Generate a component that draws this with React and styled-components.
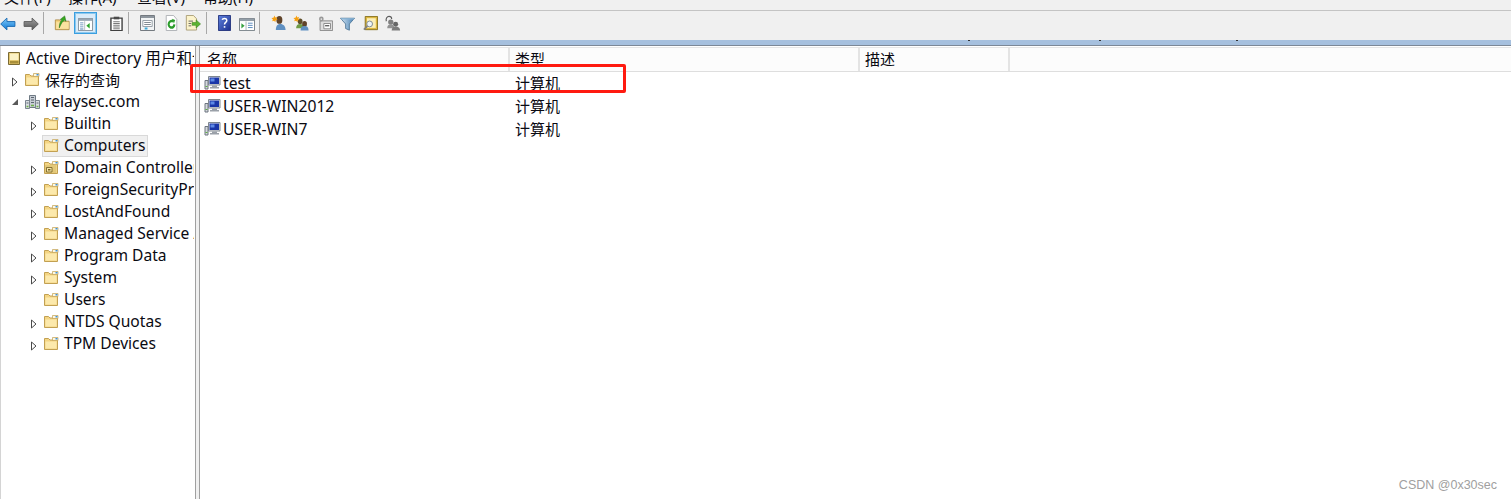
import React from "react";
import styled, { createGlobalStyle } from "styled-components";

const Global = createGlobalStyle`
  html, body { margin: 0; padding: 0; background: #fff; overflow: hidden; }
  body { font-family: "Noto Sans", "Noto Sans CJK SC", sans-serif; font-size: 15px; color: #0a0a12; }
  * { box-sizing: border-box; }
`;

const Page = styled.div`
  position: relative;
  width: 1511px;
  height: 499px;
  display: flex;
  flex-direction: column;
  overflow: hidden;
`;
const MenuBar = styled.div`
  height: 11px;
  flex: none;
  background: #f0f0f0;
  border-bottom: 1px solid #c4c4c4;
  overflow: hidden;
  display: flex;
  padding-left: 4px;
  font-size: 15px;
  line-height: 18px;
`;
const MenuItem = styled.span`
  width: ${(p) => p.$w}px;
  flex: none;
  margin-top: -12px;
  height: 18px;
  white-space: nowrap;
`;
const ToolBar = styled.div`
  height: 29px;
  flex: none;
  background: #f0f0f0;
  display: flex;
  align-items: flex-start;
  padding-top: 1px;
`;
const Tool = styled.div`
  flex: none;
  width: ${(p) => p.$w || 22}px;
  height: 22px;
  margin-left: ${(p) => p.$ml || 0}px;
  padding-bottom: 3px;
  display: flex;
  align-items: flex-end;
  justify-content: center;
  ${(p) => p.$active && "border: 1px solid #3a9fe0; box-shadow: inset 0 0 0 1px #8cc8ee; background: #d9ebf9; padding-bottom: 2px;"}
  svg { display: block; flex: none; }
`;
const ToolSep = styled.div`
  flex: none;
  width: 1px;
  height: 22px;
  margin-left: ${(p) => p.$ml || 0}px;
  background: #a8a8a8;
`;
const Band = styled.div`
  height: 6px;
  flex: none;
  background: #a6c0de;
  border-bottom: 1px solid #7d8896;
`;
const Speck = styled.i`
  position: absolute;
  top: 40px;
  left: ${(p) => p.$x}px;
  width: 2px;
  height: 1px;
  background: #333;
`;
const Panes = styled.div`
  flex: 1;
  display: flex;
  background: #f0f0f0;
  min-height: 0;
`;
const TreePane = styled.div`
  width: 196px;
  flex: none;
  background: #fff;
  border-left: 1px solid #d4d4d4;
  border-right: 1px solid #a0a0a0;
  padding: 1px 1px 0 0;
  overflow: hidden;
`;
const Row = styled.div`
  height: 22px;
  display: flex;
  align-items: center;
  padding-left: ${(p) => p.$pad}px;
  white-space: nowrap;
  overflow: hidden;
`;
const Twist = styled.span`
  width: 16px;
  height: 22px;
  flex: none;
  display: flex;
  align-items: center;
  justify-content: center;
`;
const Node = styled.span`
  height: 22px;
  flex: none;
  display: inline-flex;
  align-items: center;
  gap: ${(p) => p.$gap || 5}px;
  padding-right: 2px;
  border: 1px solid ${(p) => (p.$sel ? "#d9d9d9" : "transparent")};
  background: ${(p) => (p.$sel ? "#f0f0f0" : "transparent")};
`;
const Label = styled.span`
  font-size: ${(p) => (p.$cjk ? 15 : 15.6)}px;
  margin-top: -2px;
`;
const ArrowSvg = styled.svg`
  display: block;
  margin-top: 3px;
`;
const ListPane = styled.div`
  flex: 1;
  margin-left: 3px;
  background: #fff;
  border-left: 1px solid #a0a0a0;
  display: flex;
  flex-direction: column;
`;
const Header = styled.div`
  height: 25px;
  flex: none;
  margin-top: 1px;
  display: flex;
  background: #fcfcfc;
  border-top: 1px solid #e6e6e6;
  border-bottom: 1px solid #dedede;
`;
const HeadCell = styled.div`
  width: ${(p) => p.$w}px;
  flex: none;
  padding-left: ${(p) => p.$pl || 5}px;
  line-height: 23px;
  border-right: 2px solid #e4e4e4;
`;
const ListRow = styled.div`
  height: 23px;
  padding-bottom: 2px;
  display: flex;
  align-items: center;
  white-space: nowrap;
`;
const NameCell = styled.div`
  width: 315px;
  padding-left: 4px;
  flex: none;
  display: flex;
  align-items: center;
  gap: 2px;
  font-size: 15.7px;
`;
const RowList = styled.div`
  display: flex;
  flex-direction: column;
`;
const Mark = styled.div`
  position: absolute;
  left: 190px;
  top: 64px;
  width: 436px;
  height: 29px;
  border: 3px solid #ff1a10;
  border-radius: 2px;
`;
const Watermark = styled.div`
  position: absolute;
  right: 14px;
  bottom: 7px;
  font-family: "Liberation Sans", sans-serif;
  font-size: 12.5px;
  color: #a0a0a0;
`;

const Folder = ({ dc }) => (
  <svg width="16" height="16" viewBox="0 0 16 16">
    <path d="M1.500 2.500h4l1.500 1.500h7.500v9.500h-13z" fill="#f4d583" stroke="#c2a052" />
    <path d="M2.500 5.500h11v7h-11z" fill="#fce9ac" />
    <path d="M9.500 1.500h5.500v3h-5.500z" fill="#fff8e0" stroke="#c2a052" strokeWidth=".7" />
    <path d="M12.500 2h2v1.500h-2z" fill="#3f93de" />
    {dc && <path d="M2 5h11.500v8h-11.500z" fill="#e3c878" />}
    {dc && <path d="M3.500 7.500h5.500v4.500h-5.500z" fill="#f3e4a6" stroke="#6e5a20" strokeWidth=".8" />}
    {dc && <path d="M5 9h2.500v1.500h-2.500z" fill="#7a6420" />}
  </svg>
);
const ArrowOpen = () => (
  <ArrowSvg width="8" height="10" viewBox="0 0 8 10"><path d="M1.500 1v8l4.500-4z" fill="#fff" stroke="#4a4a4a" /></ArrowSvg>
);
const ArrowDown = () => (
  <svg width="8" height="8" viewBox="0 0 8 8"><path d="M7 1v6h-6z" fill="#595959" /></svg>
);
const Snapin = () => (
  <svg width="16" height="16" viewBox="0 0 16 16">
    <path d="M1.500 2.500h11v12h-11z" fill="#e3c66c" stroke="#7a6a34" />
    <path d="M3 3.500h8.500v6.500h-8.500z" fill="#fbf2c6" />
    <path d="M3 11h8.500v2.500h-8.500z" fill="#a98f3a" />
  </svg>
);
const Domain = () => (
  <svg width="16" height="16" viewBox="-1 0 16 16">
    <path d="M4.500 1.500h6v12h-6z" fill="#c8ced6" stroke="#6f7a84" />
    <path d="M.5 6.500h4v8h-4zM10.500 6.500h4v8h-4z" fill="#d9dee3" stroke="#7b858f" />
    <path d="M6 3.500h3M6 6h3M6 8.500h3M1.500 9h2M11.500 9h2" stroke="#5c6670" />
    <path d="M1.500 12.500h2M11.500 12.500h2M6 11.500h3" stroke="#6fb24a" strokeWidth="1.500" />
  </svg>
);
const Computer = () => (
  <svg width="17" height="17" viewBox="0 -1 17 17">
    <path d="M1 5.500h3v8.500h-3z" fill="#d5d8dc" stroke="#6d7580" />
    <path d="M1.500 11.500h2" stroke="#5fae45" />
    <path d="M4.500 1.500h11.500v8.500h-11.500z" fill="#ececec" stroke="#7f8790" />
    <path d="M5.500 2.500h9.500v6.500h-9.500z" fill="#1a36a8" />
    <path d="M6.500 3.500h4v3h-4z" fill="#5e8ae6" />
    <path d="M8 10.500h5v1.500h2v1.500h-9v-1.500h2z" fill="#9aa0a8" />
  </svg>
);

const Icons = {
  back: (
    <svg width="16" height="14" viewBox="0 0 18 16" preserveAspectRatio="none">
      <defs><linearGradient id="ba" x1="0" y1="0" x2="0" y2="1"><stop offset="0" stopColor="#7fcbfa" /><stop offset="1" stopColor="#0f78d4" /></linearGradient></defs>
      <path d="M.8 8l7-6.800v4h9v5.600h-9v4z" fill="url(#ba)" stroke="#1768b0" />
    </svg>
  ),
  forward: (
    <svg width="16" height="14" viewBox="0 0 18 16" preserveAspectRatio="none">
      <defs><linearGradient id="fo" x1="0" y1="0" x2="0" y2="1"><stop offset="0" stopColor="#a0a0a0" /><stop offset="1" stopColor="#565656" /></linearGradient></defs>
      <path d="M17.200 8l-7-6.800v4h-9v5.600h9v4z" fill="url(#fo)" stroke="#5a5a5a" />
    </svg>
  ),
  up: (
    <svg width="16" height="16" viewBox="0 0 18 18">
      <path d="M1.500 5.500h5l1 1.500h9.500v9.500h-15.500z" fill="#f4d27c" stroke="#b08c48" />
      <path d="M2.500 8h14v7.500h-14z" fill="#fae2a0" />
      <path d="M6 14c0-4 1-7 3-8.500l-2-.5 5-4 1.500 6-1.800-1.200c-2 1.200-3.700 3.700-5.700 8.700z" fill="#36a81f" stroke="#25741a" strokeWidth=".6" />
    </svg>
  ),
  tree: (
    <svg width="15" height="13" viewBox="0 0 18 16" preserveAspectRatio="none">
      <path d="M.5.500h17v15h-17z" fill="#fff" stroke="#6f7a84" />
      <path d="M1 1h16v2.500h-16z" fill="#97a6b4" />
      <path d="M2.500 5.500h4v1h-4zM2.500 8h4v1h-4zM2.500 10.500h4v1h-4zM2.500 13h4v1h-4z" fill="#4f7cae" />
      <path d="M8 4v11" stroke="#aab4bd" />
      <path d="M14 6v7l-4-3.500z" fill="#2fa52f" />
    </svg>
  ),
  clipboard: (
    <svg width="13" height="15" viewBox="0 0 14 17" preserveAspectRatio="none">
      <path d="M1 2.500h12v14h-12z" fill="#fff" stroke="#404040" strokeWidth="1.500" />
      <path d="M4 .8h6v3h-6z" fill="#4a4a4a" />
      <path d="M3.500 6.500h7M3.500 8.500h7M3.500 10.500h7M3.500 12.500h7M3.500 14.500h7" stroke="#6a6a6a" />
    </svg>
  ),
  list: (
    <svg width="15" height="16" viewBox="0 0 16 16" preserveAspectRatio="none">
      <path d="M.5.500h15v15h-15z" fill="#f2f4f5" stroke="#70767c" />
      <path d="M1 1h14v2h-14z" fill="#8e969e" />
      <path d="M3 5.500h10v6h-10z" fill="#fff" stroke="#98a0a8" />
      <path d="M4.500 7.500h7M4.500 9.500h7" stroke="#7f878f" />
      <path d="M5 13.500h3" stroke="#3aa8d8" strokeWidth="2" />
    </svg>
  ),
  refresh: (
    <svg width="13" height="16" viewBox="0 0 16 17" preserveAspectRatio="none">
      <path d="M1.500.500h9l4 4v12h-13z" fill="#fff" stroke="#a8acb0" />
      <path d="M11.500 10a3.500 3.500 0 1 1-1.500-3" fill="none" stroke="#2b9c2b" strokeWidth="2.600" />
      <path d="M8.500 4l4 1.200-1.500 3.800z" fill="#2b9c2b" />
    </svg>
  ),
  exportList: (
    <svg width="16" height="16" viewBox="0 0 18 17" preserveAspectRatio="none">
      <path d="M1.500.500h8l3.500 3.500v12h-11.500z" fill="#fcf3cb" stroke="#a99d74" />
      <path d="M4 6.500h5M4 9h3M4 11.500h3" stroke="#5e5e5e" />
      <path d="M8 8h4.500v-2.800l5 4.300-5 4.300v-2.800h-4.500z" fill="#5cb332" stroke="#388419" strokeWidth=".6" />
    </svg>
  ),
  help: (
    <svg width="13" height="16" viewBox="0 0 14 17" preserveAspectRatio="none">
      <defs><linearGradient id="he" x1="0" y1="0" x2="1" y2="1"><stop offset="0" stopColor="#5f82de" /><stop offset="1" stopColor="#1c2f8e" /></linearGradient></defs>
      <path d="M.5.500h13v16h-13z" fill="url(#he)" stroke="#24347e" />
      <path d="M4.500 5c.5-1.500 4.500-2 5 .5.300 2-2.500 2.500-2.500 4.500" fill="none" stroke="#fff" strokeWidth="1.600" />
      <path d="M6.200 11.800h1.700v1.700h-1.700z" fill="#fff" />
    </svg>
  ),
  mmc: (
    <svg width="16" height="13" viewBox="0 0 17 15" preserveAspectRatio="none">
      <path d="M.5.500h16v14h-16z" fill="#fff" stroke="#6e7880" />
      <path d="M1 1h15v2.500h-15z" fill="#929ea8" />
      <path d="M2.500 6l3.500 3-3.500 3z" fill="#35a03f" />
      <path d="M7.500 4v10" stroke="#a5afb7" />
      <path d="M9.500 6h5M9.500 8.500h5M9.500 11h5" stroke="#4f83ba" />
    </svg>
  ),
  user: (
    <svg width="15" height="16" viewBox="0 0 17 18" preserveAspectRatio="none">
      <path d="M5.500 17c0-4.500 1.500-7 5-7s6 2.500 6 7z" fill="#5f90c2" />
      <ellipse cx="9.500" cy="5.500" rx="3.400" ry="4.400" fill="#5f4329" />
      <path d="M4 .5l.8 2.200 2.200-.7-1 2 1.500 1.500-2.200.4-.4 2.300-1.400-1.800-2.200.7.900-2.100-1.700-1.500 2.300-.3z" fill="#f7a010" />
    </svg>
  ),
  group: (
    <svg width="16" height="16" viewBox="0 0 18 18" preserveAspectRatio="none">
      <ellipse cx="8" cy="7" rx="2.700" ry="3.200" fill="#5f4f2a" />
      <path d="M3.500 15c0-3.500 1.500-5 4.500-5s4 1.500 4 5z" fill="#6f9b45" />
      <ellipse cx="13" cy="10" rx="2.700" ry="3.200" fill="#5f4329" />
      <path d="M8.500 17.500c0-3.500 1.500-5 4.500-5s4.500 1.500 4.500 5z" fill="#5f90c2" />
      <path d="M4 .5l.8 2.200 2.200-.7-1 2 1.500 1.500-2.200.4-.4 2.300-1.400-1.800-2.200.7.900-2.100-1.700-1.500 2.300-.3z" fill="#f7a010" />
    </svg>
  ),
  ou: (
    <svg width="15" height="15" viewBox="0 0 18 17" preserveAspectRatio="none">
      <path d="M2.500 5.500h15v11h-15z" fill="#dedede" stroke="#808080" />
      <path d="M7 8.500h8v6h-8z" fill="#fff" stroke="#808080" />
      <path d="M8.500 11h5" stroke="#5c5c5c" strokeWidth="1.500" />
      <circle cx="4" cy="3.500" r="2.800" fill="#989898" />
      <circle cx="4" cy="3.500" r="1" fill="#e8e8e8" />
    </svg>
  ),
  filter: (
    <svg width="15" height="14" viewBox="0 0 16 17" preserveAspectRatio="none">
      <defs><linearGradient id="fi" x1="0" y1="0" x2="1" y2="0"><stop offset="0" stopColor="#d4e6f3" /><stop offset="1" stopColor="#437eb2" /></linearGradient></defs>
      <path d="M.5 1.500h15l-5.500 7v7.500l-4-2v-5.500z" fill="url(#fi)" stroke="#507899" />
      <path d="M1 1.500h14v1.500h-14z" fill="#8fb8d8" />
    </svg>
  ),
  find: (
    <svg width="15" height="15" viewBox="0 0 17 17" preserveAspectRatio="none">
      <path d="M2.500 .5h14v15h-14z" fill="#dcb740" stroke="#806a18" />
      <path d="M4.500 2.500h10v11h-10z" fill="#fcefb8" />
      <circle cx="7.500" cy="9" r="3.300" fill="#eef4f8" stroke="#727e88" />
      <path d="M5 11.500l-4 4" stroke="#808080" strokeWidth="2" />
    </svg>
  ),
  delegate: (
    <svg width="16" height="16" viewBox="0 0 18 18" preserveAspectRatio="none">
      <path d="M1.500 7c-1-3 1-5.500 3-5.500s3 1.500 3 3" fill="none" stroke="#5c5c5c" strokeWidth="1.300" />
      <circle cx="6.500" cy="8" r="3" fill="#808080" />
      <path d="M2.500 15c0-3 1.500-4.500 4-4.500s4 1.500 4 4.500z" fill="#929292" />
      <circle cx="12" cy="10.500" r="2.800" fill="#666" />
      <path d="M7.500 17.500c0-3 1.800-4.500 4.500-4.500s5 1.500 5 4.500z" fill="#7c7c7c" />
    </svg>
  ),
};

const menus = [["文件(F)", 64], ["操作(A)", 69], ["查看(V)", 66], ["帮助(H)", 66]];
const tools = [
  { i: "back", w: 16 },
  { i: "forward", ml: 4 },
  { sep: 1, ml: 1 },
  { i: "up", ml: 7 },
  { i: "tree", ml: 1, w: 23, active: 1 },
  { i: "clipboard", ml: 8 },
  { sep: 1, ml: 1 },
  { i: "list", ml: 7 },
  { i: "refresh", ml: 2 },
  { i: "exportList" },
  { sep: 1, ml: 2 },
  { i: "help", ml: 6 },
  { i: "mmc", ml: 1 },
  { sep: 1, ml: 1 },
  { i: "user", ml: 7 },
  { i: "group", ml: 1 },
  { i: "ou", ml: 2 },
  { i: "filter" },
  { i: "find", ml: 1 },
  { i: "delegate", ml: 1 },
];
const children = [
  { t: "Builtin", a: 1 },
  { t: "Computers", sel: 1 },
  { t: "Domain Controllers", a: 1, dc: 1 },
  { t: "ForeignSecurityPrincipals", a: 1 },
  { t: "LostAndFound", a: 1 },
  { t: "Managed Service Accounts", a: 1 },
  { t: "Program Data", a: 1 },
  { t: "System", a: 1 },
  { t: "Users" },
  { t: "NTDS Quotas", a: 1 },
  { t: "TPM Devices", a: 1 },
];
const computers = ["test", "USER-WIN2012", "USER-WIN7"];

export default function App() {
  return (
    <Page>
      <Global />
      <MenuBar>
        {menus.map(([m, w]) => <MenuItem key={m} $w={w}>{m}</MenuItem>)}
      </MenuBar>
      <ToolBar>
        {tools.map((t, k) =>
          t.sep ? (
            <ToolSep key={k} $ml={t.ml} />
          ) : (
            <Tool key={k} $w={t.w} $ml={t.ml} $active={t.active}>{Icons[t.i]}</Tool>
          )
        )}
      </ToolBar>
      <Band />
      {[968, 1099, 1236].map((x) => <Speck key={x} $x={x} />)}
      <Panes>
        <TreePane>
          <Row $pad={5}>
            <Node $gap={3}><Snapin /><Label>Active Directory 用户和计算机</Label></Node>
          </Row>
          <Row $pad={6}>
            <Twist><ArrowOpen /></Twist>
            <Node><Folder /><Label $cjk>保存的查询</Label></Node>
          </Row>
          <Row $pad={6}>
            <Twist><ArrowDown /></Twist>
            <Node><Domain /><Label>relaysec.com</Label></Node>
          </Row>
          {children.map((c) => (
            <Row key={c.t} $pad={25}>
              <Twist>{c.a && <ArrowOpen />}</Twist>
              <Node $sel={c.sel}><Folder dc={c.dc} /><Label>{c.t}</Label></Node>
            </Row>
          ))}
        </TreePane>
        <ListPane>
          <Header>
            <HeadCell $w={310} $pl={7}>名称</HeadCell>
            <HeadCell $w={350}>类型</HeadCell>
            <HeadCell $w={150}>描述</HeadCell>
          </Header>
          <RowList>
            {computers.map((c) => (
              <ListRow key={c}>
                <NameCell><Computer />{c}</NameCell>
                <span>计算机</span>
              </ListRow>
            ))}
          </RowList>
        </ListPane>
      </Panes>
      <Mark />
      <Watermark>CSDN @0x30sec</Watermark>
    </Page>
  );
}
